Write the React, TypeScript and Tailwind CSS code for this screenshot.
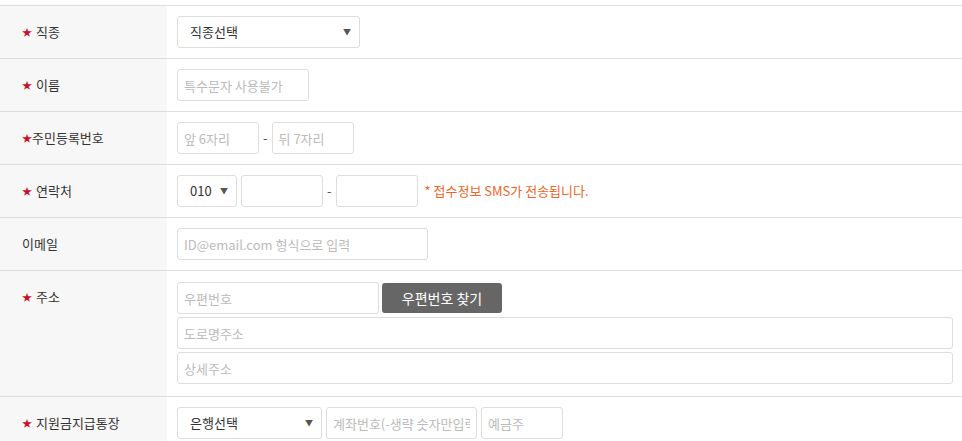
import React from "react";

const font = { fontFamily: '"Noto Sans CJK KR", "Noto Sans", sans-serif' };

function Label({ text, required = true, tight = false }: { text: string; required?: boolean; tight?: boolean }) {
  return (
    <div className="bg-[#f7f7f7] pl-[22px] pt-[16px] text-[13px] leading-[20px] text-[#333]">
      {required && (
        <span className={`text-[10px] text-[#c8102e] align-[1px] ${tight ? "mr-0" : "mr-[4px]"}`}>★</span>
      )}
      {text}
    </div>
  );
}

function TextInput({ placeholder, className = "" }: { placeholder?: string; className?: string }) {
  return (
    <input
      type="text"
      placeholder={placeholder}
      className={`h-8 rounded-[3px] border border-[#ddd] bg-white px-[6px] text-[13px] text-[#333] outline-none placeholder:text-[#bbb] ${className}`}
    />
  );
}

function SelectBox({ value, className = "" }: { value: string; className?: string }) {
  return (
    <div
      className={`flex h-8 items-center justify-between rounded-[3px] border border-[#ddd] bg-white pl-[12px] pr-[8px] text-[13px] text-[#333] ${className}`}
    >
      <span>{value}</span>
      <span className="text-[8px] text-[#555]">▼</span>
    </div>
  );
}

function Dash() {
  return <span className="mx-[4px] text-[13px] text-[#555]">-</span>;
}

function Row({ children }: { children: React.ReactNode }) {
  return <div className="grid grid-cols-[167px_1fr] border-b border-[#ddd]">{children}</div>;
}

export default function App() {
  return (
    <div className="min-h-[441px] w-[962px] bg-white pt-[5px]" style={font}>
      <div className="border-t border-[#ddd]">
        <Row>
          <Label text="직종" />
          <div className="flex items-center px-[10px] py-[10px]">
            <SelectBox value="직종선택" className="w-[183px]" />
          </div>
        </Row>

        <Row>
          <Label text="이름" />
          <div className="flex items-center px-[10px] py-[10px]">
            <TextInput placeholder="특수문자 사용불가" className="w-[132px]" />
          </div>
        </Row>

        <Row>
          <Label text="주민등록번호" tight />
          <div className="flex items-center px-[10px] py-[10px]">
            <TextInput placeholder="앞 6자리" className="w-[82px]" />
            <Dash />
            <TextInput placeholder="뒤 7자리" className="w-[82px]" />
          </div>
        </Row>

        <Row>
          <Label text="연락처" />
          <div className="flex items-center px-[10px] py-[10px]">
            <SelectBox value="010" className="w-[60px]" />
            <TextInput className="ml-[4px] w-[82px]" />
            <Dash />
            <TextInput className="w-[82px]" />
            <span className="ml-[7px] text-[13px] text-[#f26522]">* 접수정보 SMS가 전송됩니다.</span>
          </div>
        </Row>

        <Row>
          <Label text="이메일" required={false} />
          <div className="flex items-center px-[10px] py-[10px]">
            <TextInput placeholder="ID@email.com 형식으로 입력" className="w-[251px]" />
          </div>
        </Row>

        <Row>
          <Label text="주소" />
          <div className="flex flex-col gap-[3px] pl-[10px] pr-[9px] pt-[11px] pb-[12px]">
            <div className="flex items-center gap-[3px]">
              <TextInput placeholder="우편번호" className="w-[202px]" />
              <button className="h-[30px] w-[120px] rounded-[3px] bg-[#666] text-[14px] text-white">
                우편번호 찾기
              </button>
            </div>
            <TextInput placeholder="도로명주소" className="w-full" />
            <TextInput placeholder="상세주소" className="w-full" />
          </div>
        </Row>

        <Row>
          <Label text="지원금지급통장" />
          <div className="flex items-center gap-[4px] px-[10px] py-[10px]">
            <SelectBox value="은행선택" className="w-[145px]" />
            <TextInput placeholder="계좌번호(-생략 숫자만입력)" className="w-[151px]" />
            <TextInput placeholder="예금주" className="w-[82px]" />
          </div>
        </Row>
      </div>
    </div>
  );
}
